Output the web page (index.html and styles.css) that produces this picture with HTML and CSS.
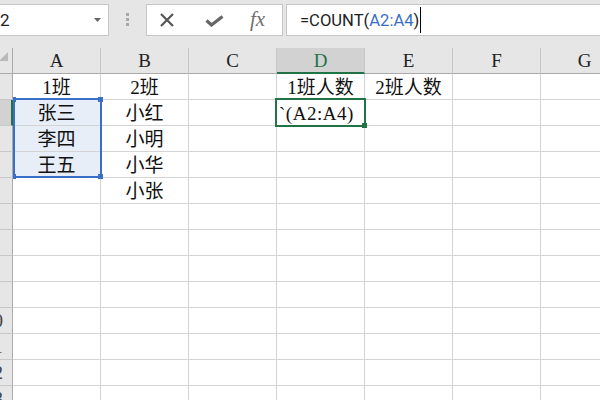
FILE: index.html
```html
<!DOCTYPE html>
<html lang="zh-CN">
<head>
<meta charset="utf-8">
<title>COUNT</title>
<link rel="stylesheet" href="styles.css">
</head>
<body>
<div class="toolbar">
  <div class="namebox"><span class="nb-text">2</span><svg class="nb-arrow" width="7" height="4" viewBox="0 0 7 4"><polygon points="0,0 7,0 3.5,4" fill="#666"/></svg></div>
  <div class="grip"><i></i><i></i><i></i></div>
  <div class="btns">
    <svg class="ic-x" width="14" height="14" viewBox="0 0 14 14"><path d="M1 1 L13 13 M13 1 L1 13" stroke="#555" stroke-width="2.2" fill="none"/></svg>
    <svg class="ic-ok" width="19" height="12" viewBox="0 0 19 12"><path d="M1.5 5.5 L6.5 10 L17.5 1.5" stroke="#666" stroke-width="3.2" fill="none"/></svg>
    <span class="fx">fx</span>
  </div>
  <div class="fbar"><span>=COUNT(</span><span class="ref">A2:A4</span><span>)</span><span class="caret"></span></div>
</div>
<div class="sheet">
  <div class="c corner"><svg width="37" height="25" viewBox="0 0 37 25"><polygon points="24,13 33,13 33,4" fill="#b9b9b9"/></svg></div>
  <div class="c h">A</div><div class="c h">B</div><div class="c h">C</div><div class="c h on">D</div><div class="c h">E</div><div class="c h">F</div><div class="c h">G</div>

  <div class="c rh">1</div><div class="c">1班</div><div class="c">2班</div><div class="c"></div><div class="c">1班人数</div><div class="c">2班人数</div><div class="c"></div><div class="c"></div>
  <div class="c rh on">2</div><div class="c sel">张三</div><div class="c">小红</div><div class="c"></div><div class="c edit">`(A2:A4)</div><div class="c"></div><div class="c"></div><div class="c"></div>
  <div class="c rh">3</div><div class="c sel">李四</div><div class="c">小明</div><div class="c"></div><div class="c"></div><div class="c"></div><div class="c"></div><div class="c"></div>
  <div class="c rh">4</div><div class="c sel">王五</div><div class="c">小华</div><div class="c"></div><div class="c"></div><div class="c"></div><div class="c"></div><div class="c"></div>
  <div class="c rh">5</div><div class="c"></div><div class="c">小张</div><div class="c"></div><div class="c"></div><div class="c"></div><div class="c"></div><div class="c"></div>
  <div class="c rh">6</div><div class="c"></div><div class="c"></div><div class="c"></div><div class="c"></div><div class="c"></div><div class="c"></div><div class="c"></div>
  <div class="c rh">7</div><div class="c"></div><div class="c"></div><div class="c"></div><div class="c"></div><div class="c"></div><div class="c"></div><div class="c"></div>
  <div class="c rh">8</div><div class="c"></div><div class="c"></div><div class="c"></div><div class="c"></div><div class="c"></div><div class="c"></div><div class="c"></div>
  <div class="c rh">9</div><div class="c"></div><div class="c"></div><div class="c"></div><div class="c"></div><div class="c"></div><div class="c"></div><div class="c"></div>
  <div class="c rh">10</div><div class="c"></div><div class="c"></div><div class="c"></div><div class="c"></div><div class="c"></div><div class="c"></div><div class="c"></div>
  <div class="c rh">11</div><div class="c"></div><div class="c"></div><div class="c"></div><div class="c"></div><div class="c"></div><div class="c"></div><div class="c"></div>
  <div class="c rh">12</div><div class="c"></div><div class="c"></div><div class="c"></div><div class="c"></div><div class="c"></div><div class="c"></div><div class="c"></div>
  <div class="c rh">13</div><div class="c"></div><div class="c"></div><div class="c"></div><div class="c"></div><div class="c"></div><div class="c"></div><div class="c"></div>

  <div class="range"></div>
  <div class="hd hd-tr"></div><div class="hd hd-br"></div><div class="hd hd-tl"></div><div class="hd hd-bl"></div>
  <div class="active"></div>
  <div class="fill"></div>
</div>
</body>
</html>
```
FILE: styles.css
```css
* { box-sizing: border-box; }
html, body { margin: 0; padding: 0; }
body {
  width: 600px;
  height: 400px;
  overflow: hidden;
  background: #fff;
  font-family: "Liberation Serif", "Noto Sans CJK SC", serif;
}
.toolbar {
  height: 48px;
  background: #e6e6e6;
  display: flex;
  align-items: flex-start;
  padding-top: 4px;
}
.namebox {
  width: 111px;
  height: 32px;
  margin-left: -2px;
  background: #fff;
  border: 1px solid #c6c6c6;
  display: flex;
  align-items: center;
  justify-content: space-between;
  padding: 0 7px 0 1px;
  font-family: Roboto, "Noto Sans", sans-serif;
  font-size: 17px;
  color: #222;
}
.nb-arrow { display: block; }
.grip {
  display: flex;
  flex-direction: column;
  gap: 2px;
  margin-left: 17px;
  margin-top: 9px;
}
.grip i { display: block; width: 3px; height: 3px; background: #a8a8a8; }
.btns {
  margin-left: 17px;
  width: 137px;
  height: 32px;
  border: 1px solid #c6c6c6;
  background: #fff;
  display: flex;
  align-items: center;
}
.ic-x { display: block; margin-left: 13px; }
.ic-ok { display: block; margin-left: 31px; margin-top: 1px; }
.fx {
  margin-left: 26px;
  font-family: "Liberation Serif", serif;
  font-style: italic;
  font-size: 21px;
  color: #707070;
  line-height: 1;
  margin-top: -1px;
}
.fbar {
  flex: 1;
  margin-left: 3px;
  margin-right: -4px;
  height: 32px;
  border: 1px solid #c6c6c6;
  background: #fff;
  display: flex;
  align-items: center;
  padding-left: 13px;
  font-family: Roboto, "Noto Sans", sans-serif;
  font-size: 16.6px;
  color: #222;
}
.fbar .ref { color: #3a6fc9; }
.caret { display: block; width: 1px; height: 26px; background: #000; margin-left: 1px; }

.sheet {
  position: relative;
  margin-left: -25px;
  width: 654px;
  display: grid;
  grid-template-columns: 38px repeat(7, 88px);
  grid-auto-rows: 26px;
}
.c {
  border-right: 1px solid #d4d4d4;
  border-bottom: 1px solid #d4d4d4;
  font-size: 19px;
  line-height: 25px;
  padding-top: 1px;
  text-align: center;
  color: #111;
  white-space: nowrap;
  overflow: hidden;
}
.corner { background: #e6e6e6; border-right-color: #ababab; border-bottom-color: #ababab; padding: 0; }
.corner svg { display: block; }
.h { background: #e6e6e6; border-right-color: #c6c6c6; border-bottom-color: #ababab; color: #222; padding-top: 0; }
.h.on { background: #d2d2d2; color: #217346; border-bottom: 2px solid #217346; }
.rh { background: #e6e6e6; border-right-color: #ababab; border-bottom-color: #c8c8c8; color: #444; padding-top: 0; }
.rh.on { background: #d2d2d2; border-right: 2px solid #217346; }
.sel { background: #e8eef8; }
.edit { text-align: left; padding-left: 2px; letter-spacing: 0.5px; }

.range {
  position: absolute;
  left: 38px;
  top: 50px;
  width: 89px;
  height: 80px;
  border: 2px solid #3a6fc9;
}
.hd { position: absolute; width: 5px; height: 5px; background: #3a6fc9; }
.hd-tr { left: 123px; top: 49px; }
.hd-br { left: 123px; top: 126px; }
.hd-tl { left: 38px; top: 49px; width: 3px; }
.hd-bl { left: 38px; top: 126px; width: 3px; }
.active {
  position: absolute;
  left: 300px;
  top: 50px;
  width: 91px;
  height: 29px;
  border: 2px solid #217346;
}
.fill { position: absolute; left: 387px; top: 75px; width: 5px; height: 5px; background: #217346; }
```
